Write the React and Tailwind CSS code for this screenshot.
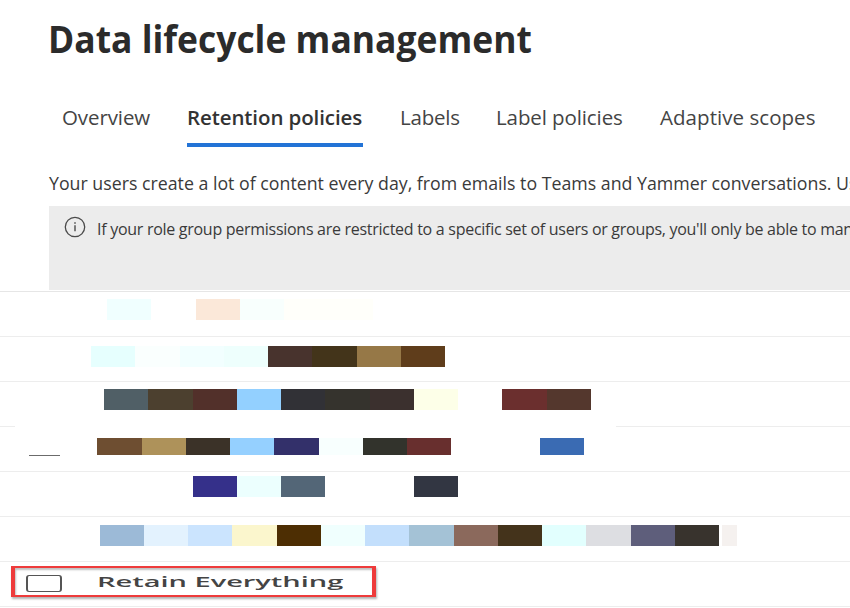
import React from "react";

const tabs = [
  { label: "Overview", className: "w-[88px] tracking-[-0.1px]" },
  { label: "Retention policies", className: "w-[176px]", active: true },
  { label: "Labels", className: "w-[59px] tracking-[-0.2px]" },
  { label: "Label policies", className: "w-[127px] tracking-[-0.1px]" },
  { label: "Adaptive scopes", className: "w-[157px] tracking-[0.05px]" },
];

// Policy names are masked, each cell is one colour block
const rows = [
  {
    offset: "pt-[7px] pl-[107px]",
    cell: "h-[21px]",
    cells: [
      "bg-[#f0ffff]",
      "",
      "bg-[#fbe8d9]",
      "bg-[#f8fffd]",
      "bg-[#fffffa]",
      "bg-[#fffffa]",
    ],
  },
  {
    offset: "pt-[9px] pl-[91px]",
    cell: "h-[21px]",
    cells: [
      "bg-[#e6fffe]",
      "bg-[#fafffe]",
      "bg-[#f2ffff]",
      "bg-[#eefffd]",
      "bg-[#48332d]",
      "bg-[#43341a]",
      "bg-[#967847]",
      "bg-[#5f3d1b]",
    ],
  },
  {
    offset: "pt-[7px] pl-[104px]",
    cell: "h-[21px]",
    shortLine: true,
    cells: [
      "bg-[#505f66]",
      "bg-[#4c402f]",
      "bg-[#52302a]",
      "bg-[#93d0ff]",
      "bg-[#313136]",
      "bg-[#35332d]",
      "bg-[#3b302e]",
      "bg-[#fdffe8]",
      "",
      "bg-[#6b2f2e]",
      "bg-[#54372d]",
    ],
  },
  {
    offset: "pt-[11px] pl-[97.3px]",
    cell: "h-[17px]",
    dash: true,
    cells: [
      "bg-[#6e4e31]",
      "bg-[#ae925a]",
      "bg-[#3b3228]",
      "bg-[#95d0ff]",
      "bg-[#33306a]",
      "bg-[#f8fffe]",
      "bg-[#32332c]",
      "bg-[#682f2e]",
      "",
      "",
      "bg-[#3a6bb3]",
    ],
  },
  {
    offset: "pt-[4px] pl-[192.5px]",
    cell: "h-[21px]",
    cells: [
      "bg-[#35308a]",
      "bg-[#ecfffe]",
      "bg-[#536677]",
      "",
      "",
      "bg-[#323642]",
    ],
  },
  {
    offset: "pt-[8px] pl-[99.5px]",
    cell: "h-[21px]",
    tail: true,
    cells: [
      "bg-[#9cbad7]",
      "bg-[#e3f2fe]",
      "bg-[#cbe4fe]",
      "bg-[#fbf6cd]",
      "bg-[#4d2e03]",
      "bg-[#f0fffe]",
      "bg-[#c3dffc]",
      "bg-[#a4c2d6]",
      "bg-[#8b695c]",
      "bg-[#44331b]",
      "bg-[#e2fffe]",
      "bg-[#dddee2]",
      "bg-[#5e5e7b]",
      "bg-[#38332d]",
    ],
  },
];

function InfoIcon() {
  return (
    <svg
      viewBox="0 0 22 22"
      className="w-[22px] h-[22px] shrink-0"
      fill="none"
      stroke="#4a4a4a"
    >
      <circle cx="11" cy="11" r="9.7" strokeWidth="1.3" />
      <path d="M11 9.3v6" strokeWidth="1.4" />
      <path d="M11 6.2v1.6" strokeWidth="1.5" />
    </svg>
  );
}

function MaskedRow({ offset, cell, cells, dash, tail, shortLine }) {
  return (
    <div className="relative h-[45px] flex flex-col justify-between">
      <div className={`flex ${offset}`}>
        {cells.map((color, i) => (
          <div key={i} className={`w-[44.25px] shrink-0 ${cell} ${color}`} />
        ))}
        {tail && <div className="ml-[3px] w-[15px] h-[21px] bg-[#f5f1ef]" />}
      </div>
      {dash && (
        <div className="absolute left-[29px] top-[28px] w-[31px] h-px bg-[#6b6b6b]" />
      )}
      {shortLine ? (
        <div className="flex justify-between">
          <div className="w-[15px] h-px bg-[#ededed]" />
          <div className="w-[234px] h-px bg-[#ededed]" />
        </div>
      ) : (
        <div className="h-px bg-[#ededed]" />
      )}
    </div>
  );
}

export default function App() {
  return (
    <div className="w-[850px] h-[608px] overflow-hidden bg-white text-[#3a3a3a] font-['Open_Sans','Noto_Sans',sans-serif]">
      <h1 className="ml-[48px] pt-[11px] h-[92px] origin-left scale-x-[0.933] text-[38px] leading-[54px] font-bold text-[#2b2b2b] whitespace-nowrap">
        Data lifecycle management
      </h1>

      <nav className="flex gap-[37px] pl-[62px] h-[55px] text-[20.5px] leading-[50px]">
        {tabs.map(({ label, className, active }) => (
          <div
            key={label}
            className={`${className} whitespace-nowrap ${
              active
                ? "border-b-4 border-[#2373d6] font-semibold tracking-[-0.1px] text-[#333]"
                : "text-[#444]"
            }`}
          >
            {label}
          </div>
        ))}
      </nav>

      <p className="pl-[49px] pt-[24px] h-[59px] text-[17.75px] leading-[24px] whitespace-nowrap">
        Your users create a lot of content every day, from emails to Teams and
        Yammer conversations. Us
      </p>

      <div className="ml-[49px] h-[84px] bg-[#ececec] flex gap-[11px] pl-[15px] pt-[10px]">
        <InfoIcon />
        <p className="pt-px text-[16px] leading-[24px] tracking-[-0.28px] whitespace-nowrap">
          If your role group permissions are restricted to a specific set of
          users or groups, you'll only be able to man
        </p>
      </div>

      <div className="mt-px h-px bg-[#e6e6e6]" />
      {rows.map((row, i) => (
        <MaskedRow key={i} {...row} />
      ))}
      <div className="h-[45px] pt-[4px] pl-[11px] border-b border-[#ededed]">
        <div className="flex items-center w-[365px] h-[31px] border-y-2 border-x-4 border-[#ee3b3b] shadow-[1px_2px_2px_rgba(0,0,0,0.3),inset_1px_2px_2px_rgba(0,0,0,0.25)]">
          <div className="ml-[11px] mt-[3px] w-[36px] h-[17px] rounded-[3px] border-x-2 border-y border-[#555]" />
          <span className="ml-[35px] origin-left scale-x-[2.07] text-[14px] leading-[20px] font-semibold text-[#444] whitespace-nowrap">
            Retain Everything
          </span>
        </div>
      </div>
    </div>
  );
}
